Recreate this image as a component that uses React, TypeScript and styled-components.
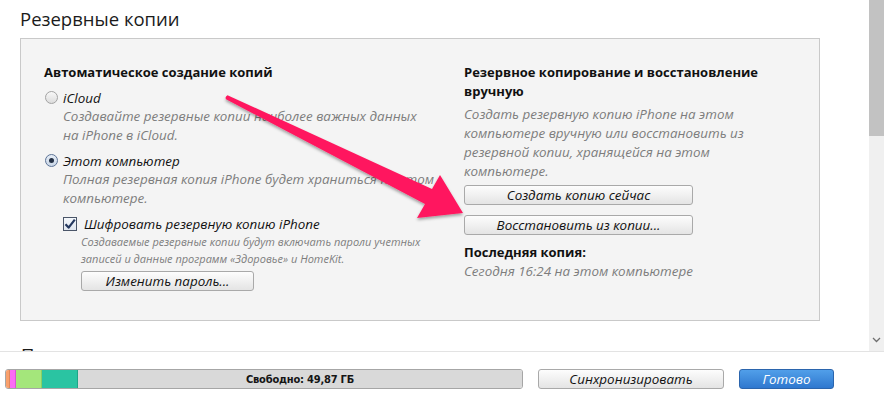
import styled, { createGlobalStyle } from "styled-components";

const GlobalStyle = createGlobalStyle`
  html, body { margin: 0; padding: 0; background: #fff; }
  body { font-family: "Open Sans", "DejaVu Sans", sans-serif; color: #111; }
`;

const Window = styled.div`
  position: relative;
  width: 884px;
  height: 398px;
  overflow: hidden;
  display: flex;
  flex-direction: column;
`;

const ScrollArea = styled.div`
  height: 351px;
  display: flex;
  overflow: hidden;
`;

const Content = styled.div`
  flex: 1;
  padding: 5px 0 0 20px;
  overflow: hidden;
`;

const SectionTitle = styled.h2<{ $gap?: number }>`
  margin: ${(p) => p.$gap ?? 0}px 0 0 ${(p) => (p.$gap ? 1 : 0)}px;
  font-size: 18.5px;
  font-weight: 400;
  line-height: 28px;
  color: #1b1b1b;
`;

const Panel = styled.section`
  margin-top: 5px;
  width: 800px;
  height: 283px;
  box-sizing: border-box;
  background: #f4f4f4;
  border: 1px solid #c9c9c9;
  padding: 24px 20px 0 23px;
  display: grid;
  grid-template-columns: 420px 1fr;
`;

const Column = styled.div`
  display: flex;
  flex-direction: column;
  align-items: flex-start;
`;

const Heading = styled.div<{ $top?: number }>`
  margin-top: ${(p) => p.$top ?? 0}px;
  font-size: 13px;
  font-weight: 700;
  line-height: 19px;
  color: #111;
`;

const Desc = styled.div<{ $indent?: number; $top?: number }>`
  padding-left: ${(p) => p.$indent ?? 0}px;
  margin-top: ${(p) => p.$top ?? 0}px;
  font-size: 13.4px;
  font-style: italic;
  line-height: 19px;
  color: #7d7d7d;
  white-space: nowrap;
`;

const SmallDesc = styled.div`
  padding-left: 37px;
  font-size: 11px;
  font-style: italic;
  line-height: 17px;
  color: #7d7d7d;
  white-space: nowrap;
`;

const OptionRow = styled.label<{ $indent?: number }>`
  display: flex;
  align-items: center;
  gap: 5px;
  margin: 6px 0 0 ${(p) => p.$indent ?? 0}px;
  height: 19px;
  font-size: 13.4px;
  font-style: italic;
  color: #111;
`;

const Radio = styled.span<{ $checked?: boolean }>`
  position: relative;
  width: 13px;
  height: 13px;
  box-sizing: border-box;
  border-radius: 50%;
  border: 1px solid ${(p) => (p.$checked ? "#5c7396" : "#a3a3a3")};
  background: ${(p) =>
    p.$checked ? "linear-gradient(#e6edf6, #c9d6e6)" : "linear-gradient(#f8f8f8, #dcdcdc)"};
  margin-left: 1px;
  &::after {
    content: "";
    display: ${(p) => (p.$checked ? "block" : "none")};
    position: absolute;
    left: 3px;
    top: 3px;
    width: 5px;
    height: 5px;
    border-radius: 50%;
    background: #233044;
  }
`;

const CheckBox = styled.span`
  width: 14px;
  height: 14px;
  box-sizing: border-box;
  border: 1px solid #4a5568;
  background: linear-gradient(#f4f7fb, #dfe5ee);
  display: flex;
  align-items: center;
  justify-content: center;
  margin-right: 2px;
`;

const Button = styled.button<{ $w: number; $top?: number; $indent?: number }>`
  display: block;
  width: ${(p) => p.$w}px;
  height: 20px;
  margin: ${(p) => p.$top ?? 0}px 0 0 ${(p) => p.$indent ?? 0}px;
  padding: 0;
  box-sizing: border-box;
  border: 1px solid #a9a9a9;
  border-radius: 3px;
  background: linear-gradient(#fdfdfd, #e4e4e4);
  font-family: "Open Sans", sans-serif;
  font-size: 13.4px;
  font-style: italic;
  line-height: 17px;
  color: #111;
`;

const PrimaryButton = styled(Button)`
  border-color: #2b65ad;
  background: linear-gradient(#519fe9, #2f78cf);
  color: #fff;
`;

const Scrollbar = styled.div`
  width: 15px;
  background: #f0f0f0;
  display: flex;
  flex-direction: column;
  justify-content: space-between;
  align-items: center;
`;

const Thumb = styled.div`
  width: 15px;
  height: 136px;
  background: #c2c2c2;
`;

const ScrollArrow = styled.div`
  height: 16px;
  margin-bottom: 3px;
  display: flex;
  align-items: center;
`;

const BottomBar = styled.footer`
  flex: 1;
  border-top: 1px solid #e3e3e3;
  display: flex;
  align-items: flex-start;
  gap: 15px;
  padding: 17px 0 0 5px;
`;

const Storage = styled.div`
  width: 518px;
  height: 20px;
  box-sizing: border-box;
  border: 1px solid #a6a6a6;
  border-radius: 3px;
  display: flex;
  overflow: hidden;
`;

const Segment = styled.div<{ $w: number; $c: string; $edge: string }>`
  width: ${(p) => p.$w}px;
  background: ${(p) => p.$c};
  border-right: 1px solid ${(p) => p.$edge};
  box-sizing: border-box;
`;

const FreeSpace = styled.div`
  flex: 1;
  background: #d9d9d9;
  display: flex;
  align-items: center;
  justify-content: center;
  font-family: "DejaVu Sans Condensed", "DejaVu Sans", sans-serif;
  font-stretch: condensed;
  font-size: 11px;
  font-weight: 700;
  color: #151515;
  letter-spacing: -0.2px;
`;

const Overlay = styled.svg`
  position: absolute;
  left: 0;
  top: 0;
  pointer-events: none;
`;

const segments = [
  { w: 4, c: "#f9a06c", e: "#e0865a" },
  { w: 6, c: "#fb6cf6", e: "#d955d4" },
  { w: 26, c: "#a4e67b", e: "#8bcf63" },
  { w: 36, c: "#2ac4a2", e: "#1fa587" },
];

export default function App() {
  return (
    <Window>
      <GlobalStyle />
      <ScrollArea>
        <Content>
          <SectionTitle>Резервные копии</SectionTitle>
          <Panel>
            <Column>
              <Heading>Автоматическое создание копий</Heading>
              <OptionRow>
                <Radio />
                iCloud
              </OptionRow>
              <Desc $indent={19}>
                Создавайте резервные копии наиболее важных данных
                <br />
                на iPhone в iCloud.
              </Desc>
              <OptionRow>
                <Radio $checked />
                Этот компьютер
              </OptionRow>
              <Desc $indent={19}>
                Полная резервная копия iPhone будет храниться на этом
                <br />
                компьютере.
              </Desc>
              <OptionRow $indent={19}>
                <CheckBox>
                  <svg width="12" height="12" viewBox="0 0 12 12">
                    <path d="M1.5 6.2 L4.6 9.6 L10.8 1.6" fill="none" stroke="#23375e" strokeWidth="2.2" strokeLinejoin="round" />
                  </svg>
                </CheckBox>
                Шифровать резервную копию iPhone
              </OptionRow>
              <SmallDesc>
                Создаваемые резервные копии будут включать пароли учетных
                <br />
                записей и данные программ «Здоровье» и HomeKit.
              </SmallDesc>
              <Button $w={173} $top={4} $indent={37}>
                Изменить пароль...
              </Button>
            </Column>
            <Column>
              <Heading>
                Резервное копирование и восстановление
                <br />
                вручную
              </Heading>
              <Desc $top={4}>
                Создать резервную копию iPhone на этом
                <br />
                компьютере вручную или восстановить из
                <br />
                резервной копии, хранящейся на этом
                <br />
                компьютере.
              </Desc>
              <Button $w={229} $top={4}>
                Создать копию сейчас
              </Button>
              <Button $w={229} $top={10}>
                Восстановить из копии...
              </Button>
              <Heading $top={8}>Последняя копия:</Heading>
              <Desc>Сегодня 16:24 на этом компьютере</Desc>
            </Column>
          </Panel>
          <SectionTitle $gap={20}>Параметры</SectionTitle>
        </Content>
        <Scrollbar>
          <Thumb />
          <ScrollArrow>
            <svg width="9" height="6" viewBox="0 0 9 6">
              <path d="M1 1 L4.5 4.5 L8 1" fill="none" stroke="#6f6f6f" strokeWidth="1.3" />
            </svg>
          </ScrollArrow>
        </Scrollbar>
      </ScrollArea>
      <BottomBar>
        <Storage>
          {segments.map((s, i) => (
            <Segment key={i} $w={s.w} $c={s.c} $edge={s.e} />
          ))}
          <FreeSpace>Свободно: 49,87 ГБ</FreeSpace>
        </Storage>
        <Button $w={186}>Синхронизировать</Button>
        <PrimaryButton $w={95}>Готово</PrimaryButton>
      </BottomBar>
      <Overlay width="884" height="351" viewBox="0 0 884 351">
        <defs>
          <filter id="arrowShadow" x="-10%" y="-10%" width="130%" height="140%">
            <feDropShadow dx="0" dy="2" stdDeviation="1.6" floodColor="#000" floodOpacity="0.35" />
          </filter>
        </defs>
        <path
          d="M227.5 95.2 L432 189 L440 175 L463 213 L417 218 L425 204 L226 99.2 Q224.6 97 227.5 95.2 Z"
          fill="#ff195e"
          filter="url(#arrowShadow)"
        />
      </Overlay>
    </Window>
  );
}
